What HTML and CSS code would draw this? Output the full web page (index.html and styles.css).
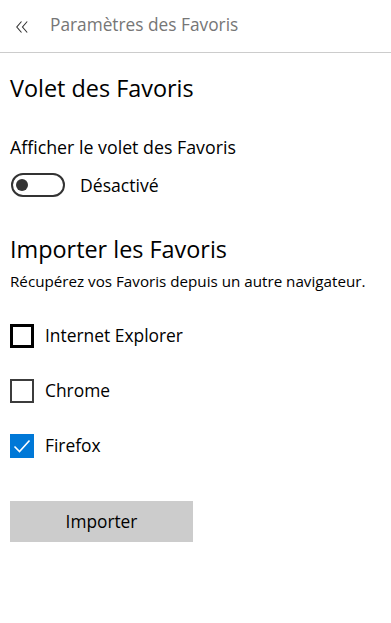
FILE: index.html
```html
<!DOCTYPE html>
<html lang="fr">
<head>
<meta charset="utf-8">
<title>Paramètres des Favoris</title>
<link rel="stylesheet" href="styles.css">
</head>
<body>
<div class="app">
  <header class="topbar">
    <span class="back" aria-label="Retour">
      <svg width="12" height="12" viewBox="0 0 12 12"><polyline points="5.5,0.5 0.8,6 5.5,11.5" fill="none" stroke="#333" stroke-width="1.1"/><polyline points="11.2,0.5 6.5,6 11.2,11.5" fill="none" stroke="#333" stroke-width="1.1"/></svg>
    </span>
    <span class="topbar-title">Paramètres des Favoris</span>
  </header>
  <main class="content">
    <h2 class="section-title first">Volet des Favoris</h2>
    <p class="field-label">Afficher le volet des Favoris</p>
    <div class="toggle-row">
      <span class="toggle"><span class="knob"></span></span>
      <span class="toggle-text">Désactivé</span>
    </div>
    <h2 class="section-title second">Importer les Favoris</h2>
    <p class="desc">Récupérez vos Favoris depuis un autre navigateur.</p>
    <ul class="checks">
      <li class="check-row"><span class="box focus"></span><span class="check-label">Internet Explorer</span></li>
      <li class="check-row"><span class="box"></span><span class="check-label">Chrome</span></li>
      <li class="check-row"><span class="box checked"><svg width="24" height="24" viewBox="0 0 24 24"><polyline points="4.5,12.5 9.5,17.5 19.5,6.5" fill="none" stroke="#fff" stroke-width="1.6"/></svg></span><span class="check-label">Firefox</span></li>
    </ul>
    <button class="import-btn" type="button">Importer</button>
  </main>
</div>
</body>
</html>
```
FILE: styles.css
```css
html, body {
  margin: 0;
  padding: 0;
  background: #fff;
}
body {
  font-family: "Segoe UI", "Open Sans", "Noto Sans", sans-serif;
  color: #000;
}
.app {
  width: 391px;
  min-height: 623px;
}
.topbar {
  height: 52px;
  border-bottom: 1px solid #cccccc;
  display: flex;
  align-items: center;
  padding-left: 16px;
  box-sizing: content-box;
}
.back {
  display: flex;
  width: 12px;
  height: 12px;
  margin-top: 2px;
}
.topbar-title {
  margin-left: 22px;
  font-size: 17.3px;
  color: #767676;
  line-height: 22px;
  margin-top: -3px;
}
.content {
  padding: 0 10px;
}
.section-title {
  margin: 0;
  font-weight: 400;
  font-size: 23.4px;
  line-height: 30px;
}
.section-title.first {
  margin-top: 20px;
}
.section-title.second {
  margin-top: 37px;
}
.field-label {
  margin: 33px 0 0;
  font-size: 17.8px;
  line-height: 22px;
}
.toggle-row {
  display: flex;
  align-items: center;
  margin-top: 15px;
  height: 24px;
}
.toggle {
  box-sizing: border-box;
  width: 54px;
  height: 24px;
  border: 2px solid #333;
  border-radius: 12px;
  display: flex;
  align-items: center;
  margin-left: 1px;
}
.knob {
  width: 12px;
  height: 12px;
  border-radius: 50%;
  background: #333;
  margin-left: 3px;
}
.toggle-text {
  margin-left: 15px;
  font-size: 17.6px;
  line-height: 22px;
}
.desc {
  margin: 7px 0 0;
  font-size: 15.2px;
  line-height: 20px;
}
.checks {
  list-style: none;
  margin: 33px 0 0;
  padding: 0;
  display: flex;
  flex-direction: column;
  gap: 31px;
}
.check-row {
  display: flex;
  align-items: center;
  height: 24px;
}
.box {
  box-sizing: border-box;
  width: 24px;
  height: 24px;
  border: 2px solid #3c3c3c;
  flex: none;
  display: flex;
}
.box.focus {
  border: 3px solid #000;
}
.box.checked {
  border: none;
  background: #0078d7;
}
.check-label {
  margin-left: 11px;
  font-size: 17.4px;
  line-height: 22px;
  margin-top: -2px;
}
.import-btn {
  display: block;
  margin-top: 43px;
  width: 183px;
  height: 41px;
  border: none;
  background: #cccccc;
  font-family: inherit;
  font-size: 17.3px;
  color: #000;
  padding: 0;
}
```
